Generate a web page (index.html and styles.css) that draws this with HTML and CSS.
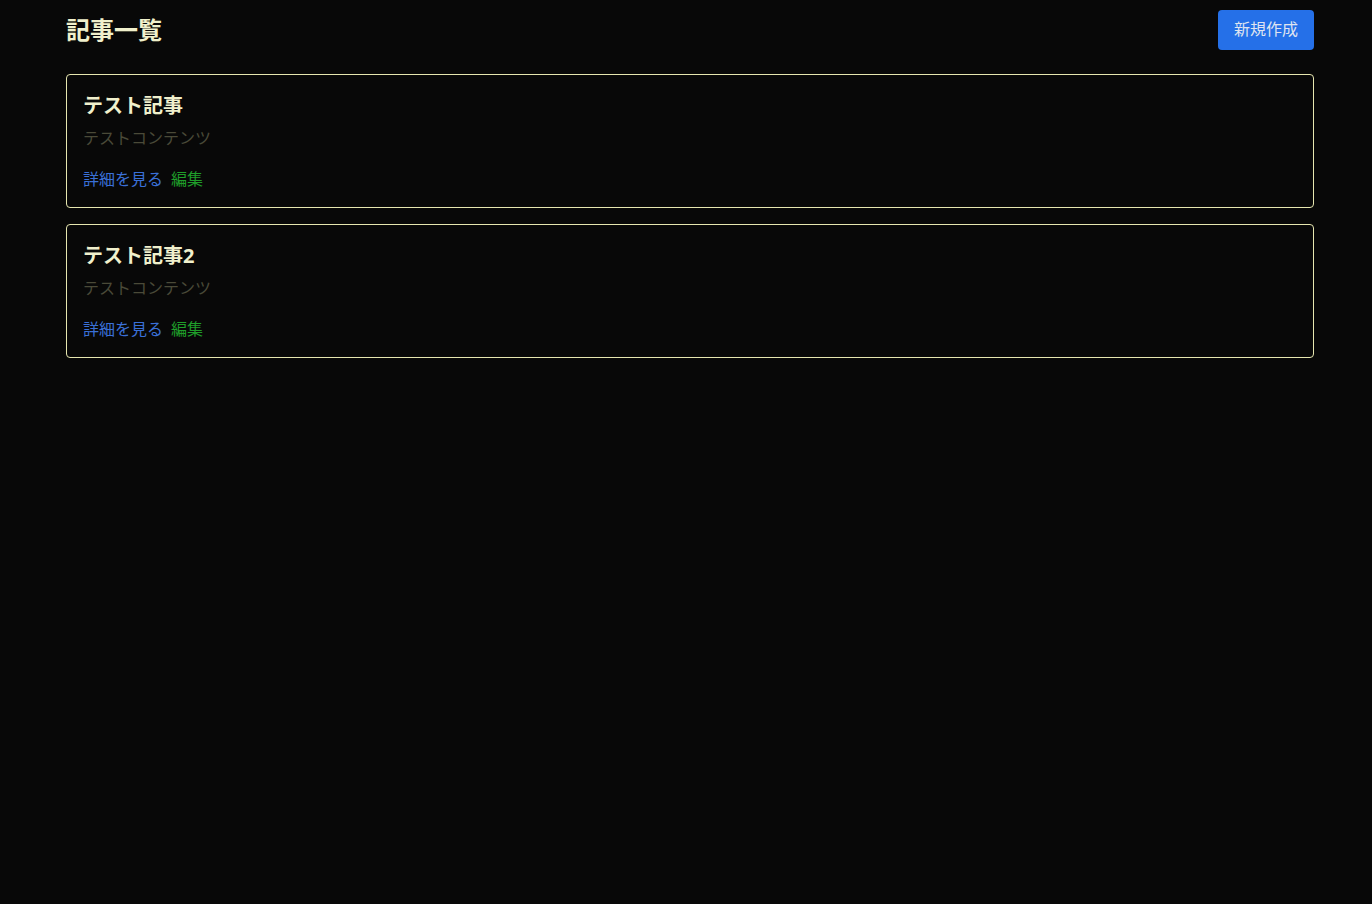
FILE: index.html
```html
<!DOCTYPE html>
<html lang="ja">
<head>
	<meta charset="UTF-8">
	<title>記事一覧</title>
	<link rel="stylesheet" href="styles.css">
</head>
<body>
	<div class="container">
		<div class="header">
			<h1 class="page-title">記事一覧</h1>
			<a class="btn-new" href="#">新規作成</a>
		</div>
		<div class="post-list">
			<div class="post-card">
				<h2 class="post-title">テスト記事</h2>
				<p class="post-body">テストコンテンツ</p>
				<div class="post-links">
					<a class="link-detail" href="#">詳細を見る</a>
					<a class="link-edit" href="#">編集</a>
				</div>
			</div>
			<div class="post-card">
				<h2 class="post-title">テスト記事2</h2>
				<p class="post-body">テストコンテンツ</p>
				<div class="post-links">
					<a class="link-detail" href="#">詳細を見る</a>
					<a class="link-edit" href="#">編集</a>
				</div>
			</div>
		</div>
	</div>
</body>
</html>
```

FILE: styles.css
```css
* {
    margin: 0;
    padding: 0;
    box-sizing: border-box;
}
a {
    text-decoration: none;
}
body {
    background-color: #080808;
    color: #ededc4;
    font-family: "Noto Sans", "Noto Sans CJK JP", sans-serif;
    font-size: 16px;
    line-height: 24px;
}
.container {
    width: 1248px;
    margin-left: 66px;
    padding-top: 10px;
}
.header {
    display: flex;
    justify-content: space-between;
    align-items: center;
    height: 40px;
    margin-bottom: 24px;
}
.page-title {
    font-size: 24px;
    line-height: 32px;
    font-weight: bold;
    color: #f0f0cc;
}
.btn-new {
    display: block;
    height: 40px;
    line-height: 38px;
    padding: 0 16px;
    border-radius: 4px;
    background-color: #2570e8;
    color: #dfe4f0;
    font-size: 16px;
}
.post-list {
    display: flex;
    flex-direction: column;
    gap: 16px;
}
.post-card {
    border: 1px solid #e6e6b0;
    border-radius: 4px;
    padding: 16px;
}
.post-title {
    font-size: 20px;
    line-height: 30px;
    font-weight: bold;
    color: #f0f0cc;
    margin-bottom: 5px;
}
.post-body {
    color: #4a4a38;
    margin-bottom: 17px;
}
.post-links {
    display: flex;
    gap: 8px;
}
.link-detail {
    color: #3a70d8;
}
.link-edit {
    color: #1f9e2a;
}
```
